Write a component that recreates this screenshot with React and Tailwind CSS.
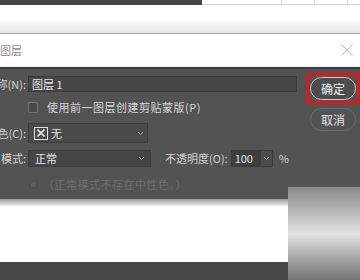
import React from 'react';

const cjk = "font-['Noto_Sans_CJK_SC','Liberation_Sans',sans-serif]";

const Chevron = () => (
  <svg width="7" height="5" viewBox="0 0 7 5" className="shrink-0">
    <path d="M1 1 L3.5 3.5 L6 1" fill="none" stroke="#a8a8a8" strokeWidth="1" />
  </svg>
);

const Label = ({ children }) => (
  <div className="w-[68px] text-right pr-[1px] whitespace-nowrap text-[#d2d2d2]">{children}</div>
);

const App = () => {
  return (
    <div className={`w-[360px] h-[280px] overflow-hidden relative bg-white flex flex-col ${cjk} text-[11px] leading-none`}>
      {/* top strip: dark toolbar + table edge */}
      <div className="flex h-[5px] shrink-0">
        <div className="w-[202px] bg-[#454545]" />
        <div className="flex-1 flex border-b border-[#cfd4d4]">
          <div className="w-[80px] border-r border-[#d6dada]" />
          <div className="w-[33px] border-r border-[#d6dada]" />
          <div className="w-[33px] border-r border-[#d6dada]" />
          <div className="flex-1" />
        </div>
      </div>

      {/* white page area behind the dialog */}
      <div className="h-[29px] shrink-0 bg-gradient-to-b from-white via-white via-50% to-[#e4e4e4] border-b border-[#a8a8a8]" />

      {/* dialog title bar */}
      <div className="h-[33px] shrink-0 bg-white flex items-center justify-between border-b border-[#f0f0f0]">
        <span className="-ml-[22px] text-[11px] text-[#8c8c8c]">新建图层</span>
        <svg width="12" height="12" viewBox="0 0 12 12" className="mr-[7px]">
          <path d="M0.5 0.5 L11.5 11.5 M11.5 0.5 L0.5 11.5" stroke="#b8b8b8" strokeWidth="1" />
        </svg>
      </div>

      {/* dialog body */}
      <div className="h-[132px] shrink-0 bg-[#535353] border-t-2 border-[#3f3f3f] flex">
        <div className="-ml-[41px] w-[347px] pt-[7px] flex flex-col">
          <div className="flex items-center h-[16px]">
            <Label>名称(N):</Label>
            <div className="ml-[1px] w-[269px] h-[16px] bg-[#464646] border border-[#3a3a3a] flex items-center pl-[3px] text-[#e6e6e6]">
              图层 1
            </div>
          </div>

          <div className="mt-[10px] flex items-center h-[11px]">
            <div className="ml-[69px] w-[10px] h-[11px] border border-[#757575] bg-[#4a4a4a] rounded-[1px]" />
            <span className="ml-[9px] text-[#d6d6d6] tracking-[0.5px]">使用前一图层创建剪贴蒙版(P)</span>
          </div>

          <div className="mt-[10px] flex items-center h-[20px]">
            <Label>颜色(C):</Label>
            <div className="ml-[1px] w-[120px] h-[20px] bg-[#4b4b4b] border border-[#3e3e3e] flex items-center pl-[5px] pr-[3px] text-[#e6e6e6]">
              <div className="w-[14px] h-[13px] border border-[#e0e0e0] flex items-center justify-center">
                <svg width="8" height="8" viewBox="0 0 8 8">
                  <path d="M0.5 0.5 L7.5 7.5 M7.5 0.5 L0.5 7.5" stroke="#e6e6e6" strokeWidth="1.6" />
                </svg>
              </div>
              <span className="ml-[3px] flex-1">无</span>
              <Chevron />
            </div>
          </div>

          <div className="mt-[7px] flex items-center h-[17px]">
            <Label>模式:</Label>
            <div className="ml-[1px] w-[123px] h-[17px] bg-[#454545] border border-[#3c3c3c] flex items-center pl-[6px] pr-[5px] text-[#e6e6e6]">
              <span className="flex-1">正常</span>
              <Chevron />
            </div>
            <span className="ml-[14px] text-[#d2d2d2]">不透明度(O):</span>
            <div className="ml-[3px] flex h-[17px] border border-[#3c3c3c]">
              <div className="w-[28px] bg-[#3e3e3e] flex items-center pl-[3px] text-[#e6e6e6]">100</div>
              <div className="w-[12px] bg-[#4c4c4c] border-l border-[#3c3c3c] flex items-center justify-center">
                <Chevron />
              </div>
            </div>
            <span className="ml-[6px] text-[#d2d2d2]">%</span>
          </div>

          <div className="mt-[12px] flex items-center h-[10px]">
            <div className="ml-[71px] w-[7px] h-[7px] bg-[#5c5c5c] border border-[#4e4e4e]" />
            <span className="ml-[6px] text-[#6e6e6e] tracking-[0.5px]">（正常模式不存在中性色。）</span>
          </div>
        </div>

        <div className="pt-[4px] flex flex-col">
          <div className="border-[3px] border-[#e01818] rounded-[4px] p-[1px] w-[54px]">
            <button className="w-[46px] h-[23px] rounded-full border border-[#c9c9c9] bg-[#4d4d4d] text-[12px] text-[#f0f0f0]">
              确定
            </button>
          </div>
          <button className="mt-[4px] ml-[4px] w-[46px] h-[23px] rounded-full border border-[#6c6c6c] bg-[#535353] text-[12px] text-[#e4e4e4]">
            取消
          </button>
        </div>
      </div>

      {/* shadow under dialog, page, bottom bar */}
      <div className="h-[8px] shrink-0 bg-gradient-to-b from-[#9a9a9a] to-white" />
      <div className="flex-1 bg-white" />
      <div className="h-[18px] shrink-0 bg-[#474747]" />

      {/* grey overlay panel in the corner */}
      <div className="absolute left-[288px] top-[187px] w-[72px] h-[93px] bg-gradient-to-b from-[#8a8a8a] via-[#e2e2e2] to-[#757575]" />
    </div>
  );
};

export default App;
